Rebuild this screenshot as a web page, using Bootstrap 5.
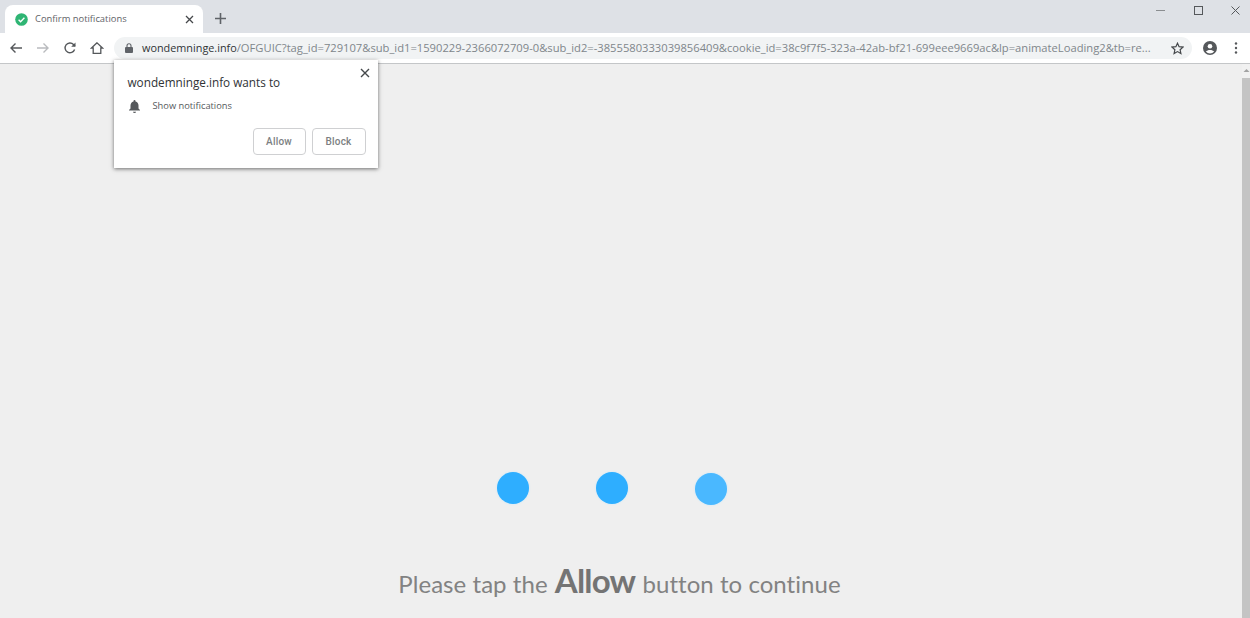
<!DOCTYPE html>
<html lang="en">
<head>
<meta charset="utf-8">
<title>Confirm notifications</title>
<link rel="stylesheet" href="https://cdn.jsdelivr.net/npm/bootstrap@5.3.0/dist/css/bootstrap.min.css">
<style>
html,body{height:618px;overflow:hidden}
body{background:#efefef;font-family:"Open Sans","Noto Sans",sans-serif;color:#3c4043}
.tabstrip{height:33px;background:#dee1e6;padding:5px 0 0 5px}
.chrome-tab{width:198px;height:28px;background:#fff;border-radius:8px 8px 0 0;padding:0 9px 0 10px;font-size:9.4px;color:#5f6368}
.tab-ok{width:13px;height:13px;flex:none}
.tab-title{flex:1;margin-left:7px;white-space:nowrap}
.newtab{margin-left:12px;margin-top:8px}
.winbtns{margin-left:auto;height:20px;margin-top:-5px;gap:28.5px;padding-right:10px}
.toolbar{height:31px;background:#fff;border-bottom:1px solid #c4c6c8;padding:0 0 0 8.5px}
.navicon{width:14px;height:14px;flex:none}
.navicon+.navicon{margin-left:13px}
.omnibox{width:1078px;height:22px;border-radius:11px;background:#f1f3f4;margin-left:10.500px;padding:0 8px 0 11px;font-size:11.2px;white-space:nowrap;color:#80868b;flex:none}
.omni-url{margin-left:9px;flex:1;min-width:0}
.omni-host{color:#303336;font-size:10.85px}
.omni-star{margin-left:auto}
.acct-icon{margin-left:11px}
.more-icon{margin-left:17px}
.pagearea{height:554px;position:relative}
.page-main{flex:1;padding-top:408px}
.dot-row{gap:67px;padding-right:18px}
.load-dot{width:32px;height:32px;border-radius:50%;background:#2eaeff;box-shadow:0 0 2px #bfe6ff}
.load-dot-faded{background:#4ab8ff;margin-top:1px}
.tap-msg{margin:57px 0 0;padding-right:3px;font-family:Lato,"Open Sans",sans-serif;font-size:24px;line-height:36px;color:#828282;text-align:center;letter-spacing:.05px}
.tap-msg b{font-size:33px;font-weight:700;color:#747474;letter-spacing:-.8px;margin:0 1px}
.fakebar{width:8px;background:#f1f1f1;flex:none}
.bar-arrow{height:14px}
.bar-thumb{flex:1;background:#c4c4c4}
.perm-pop{position:absolute;left:114px;top:-4px;width:264px;height:108px;background:#fff;box-shadow:0 1px 4px rgba(0,0,0,.55);padding:14px 12.5px 0 13.5px}
.perm-close{position:absolute;top:8px;right:8px;width:10px;height:10px}
.perm-title{font-size:11.75px;line-height:17px;color:#303336;white-space:nowrap}
.perm-row{margin-top:8px;font-size:9.3px;line-height:14px;color:#55595c}
.perm-bell{width:13px;height:14px;margin-right:12px}
.perm-actions{gap:6px;margin-top:15px}
.perm-btn{width:53px;height:27px;padding:0;font-family:Roboto,sans-serif;font-size:10px;font-weight:500;color:#7c7f82;background:#fff;border:1px solid #cfd0d2;border-radius:4px;letter-spacing:.2px}
.perm-btn+.perm-btn{width:54px}
</style>
</head>
<body>
<div class="tabstrip d-flex align-items-start">
  <div class="chrome-tab d-flex align-items-center">
    <svg class="tab-ok" viewBox="0 0 13 13"><circle cx="6.5" cy="6.5" r="6.3" fill="#2fb574"/><path d="M3.6 6.7l2 2 3.8-4" fill="none" stroke="#fff" stroke-width="1.3"/></svg>
    <span class="tab-title">Confirm notifications</span>
    <svg width="9" height="9" viewBox="0 0 9 9"><path d="M1 1l7 7M8 1l-7 7" stroke="#45484b" stroke-width="1.3"/></svg>
  </div>
  <svg class="newtab" width="11" height="11" viewBox="0 0 11 11"><path d="M5.500 0v11M0 5.500h11" stroke="#5f6368" stroke-width="1.6"/></svg>
  <div class="winbtns d-flex align-items-center">
    <svg width="9" height="9" viewBox="0 0 9 9"><path d="M0 4.500h9" stroke="#8a8d90" stroke-width="1"/></svg>
    <svg width="9" height="9" viewBox="0 0 9 9"><rect x=".5" y=".5" width="8" height="8" fill="none" stroke="#55585b"/></svg>
    <svg width="9" height="9" viewBox="0 0 9 9"><path d="M.5.5l8 8M8.500.5l-8 8" stroke="#55585b"/></svg>
  </div>
</div>
<div class="toolbar d-flex align-items-center">
  <svg class="navicon" viewBox="0 0 14 14"><path d="M13 7H2M6.500 2.500L2 7l4.500 4.500" fill="none" stroke="#55585b" stroke-width="1.400"/></svg>
  <svg class="navicon" viewBox="0 0 14 14"><path d="M1 7h11M7.500 2.500L12 7l-4.500 4.500" fill="none" stroke="#b9bbbe" stroke-width="1.400"/></svg>
  <svg class="navicon" viewBox="0 0 14 14"><path d="M11.600 8.500A4.900 4.900 0 1 1 10.500 3.500L12 5" fill="none" stroke="#55585b" stroke-width="1.400"/><path d="M12.500 1.500v4.300H8.200z" fill="#55585b"/></svg>
  <svg class="navicon" viewBox="0 0 14 14"><path d="M7 1.800L1.500 7H3.200v5.300h7.600V7h1.700z" fill="none" stroke="#55585b" stroke-width="1.300"/></svg>
  <div class="omnibox d-flex align-items-center">
    <svg width="8" height="10" viewBox="0 0 8 10" class="flex-shrink-0"><rect y="4" width="8" height="6" rx="1" fill="#5f6368"/><path d="M2 4.500V2.800a2 2 0 0 1 4 0v1.700" fill="none" stroke="#5f6368" stroke-width="1.100"/></svg>
    <span class="omni-url"><span class="omni-host">wondemninge.info</span>/OFGUIC?tag_id=729107&amp;sub_id1=1590229-2366072709-0&amp;sub_id2=-3855580333039856409&amp;cookie_id=38c9f7f5-323a-42ab-bf21-699eee9669ac&amp;lp=animateLoading2&amp;tb=re...</span>
    <svg width="13" height="13" viewBox="0 0 13 13" class="omni-star flex-shrink-0"><path d="M6.500 1.200l1.600 3.500 3.800.4-2.800 2.600.8 3.800-3.400-1.900-3.400 1.900.8-3.800L1.100 5.100l3.800-.4z" fill="none" stroke="#45484b" stroke-width="1.200"/></svg>
  </div>
  <svg width="14" height="14" viewBox="0 0 14 14" class="acct-icon flex-shrink-0"><circle cx="7" cy="7" r="7" fill="#55585b"/><circle cx="7" cy="5.200" r="2.300" fill="#fff"/><path d="M2.800 10.600c1.800-2.300 6.600-2.300 8.400 0A5.600 5.600 0 0 1 2.800 10.600z" fill="#fff"/></svg>
  <svg width="4" height="12" viewBox="0 0 4 12" class="more-icon flex-shrink-0"><circle cx="2" cy="1.500" r="1.200" fill="#55585b"/><circle cx="2" cy="6" r="1.200" fill="#55585b"/><circle cx="2" cy="10.500" r="1.200" fill="#55585b"/></svg>
</div>
<div class="pagearea d-flex">
  <main class="page-main">
    <div class="dot-row d-flex justify-content-center align-items-start">
      <div class="load-dot"></div><div class="load-dot"></div><div class="load-dot load-dot-faded"></div>
    </div>
    <p class="tap-msg">Please tap the <b>Allow</b> button to continue</p>
  </main>
  <div class="fakebar d-flex flex-column">
    <div class="bar-arrow d-flex justify-content-center pt-1"><svg width="7" height="5" viewBox="0 0 7 5"><path d="M3.500 1L6.500 4H.5z" fill="#a3a3a3"/></svg></div>
    <div class="bar-thumb"></div>
  </div>
  <div class="perm-pop">
    <svg class="perm-close" viewBox="0 0 10 10"><path d="M1 1l8 8M9 1l-8 8" stroke="#45484b" stroke-width="1.400"/></svg>
    <div class="perm-title">wondemninge.info wants to</div>
    <div class="perm-row d-flex align-items-center">
      <svg class="perm-bell" viewBox="0 0 13 14"><path d="M6.500 1a1 1 0 0 1 1 1v.4c2 .5 3 2.200 3 4.100v3l1.500 1.500v.5H1V11l1.500-1.500v-3c0-1.900 1-3.600 3-4.100V2a1 1 0 0 1 1-1z" fill="#55585b"/><path d="M5 12.700h3a1.500 1.300 0 0 1-3 0z" fill="#55585b"/></svg>
      <span>Show notifications</span>
    </div>
    <div class="perm-actions d-flex justify-content-end">
      <button type="button" class="btn perm-btn">Allow</button>
      <button type="button" class="btn perm-btn">Block</button>
    </div>
  </div>
</div>
<script src="https://cdn.jsdelivr.net/npm/bootstrap@5.3.0/dist/js/bootstrap.bundle.min.js"></script>
</body>
</html>
